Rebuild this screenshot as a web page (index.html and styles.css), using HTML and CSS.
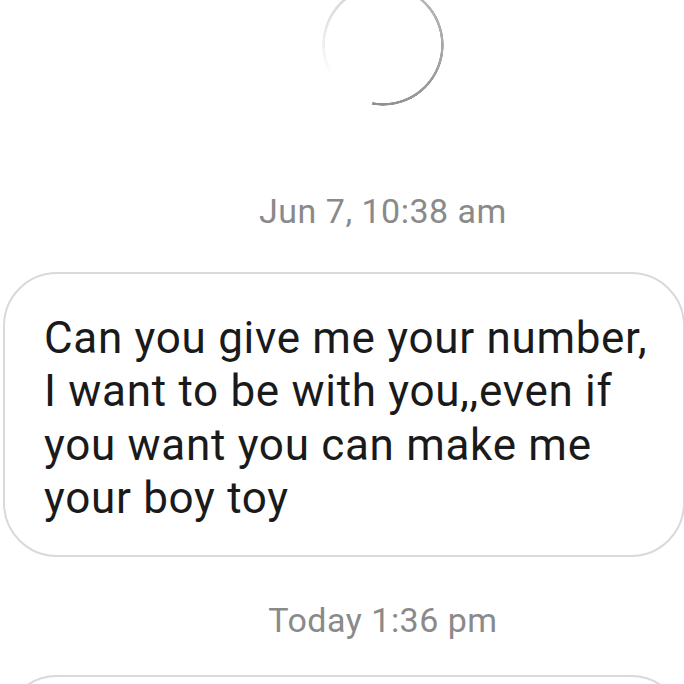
FILE: index.html
```
<!DOCTYPE html>
<html>
<head>
<meta charset="utf-8">
<link rel="stylesheet" href="styles.css">
</head>
<body>
<div class="thread">
  <div class="center-col">
    <div class="spinner"></div>
    <div class="stamp stamp-first">Jun 7, 10:38 am</div>
  </div>
  <div class="bubble">Can you give me your number,<br>I want to be with you,,even if<br>you want you can make me<br>your boy toy</div>
  <div class="center-col">
    <div class="stamp stamp-second">Today 1:36 pm</div>
  </div>
  <div class="bubble bubble-next"></div>
</div>
</body>
</html>
```
FILE: styles.css
```
html, body {
  margin: 0;
  padding: 0;
  background: #ffffff;
  width: 684px;
  height: 684px;
  overflow: hidden;
}
.thread {
  font-family: Roboto, "Noto Sans", sans-serif;
  display: flex;
  flex-direction: column;
}
.center-col {
  padding-left: 82px;
  display: flex;
  flex-direction: column;
  align-items: center;
}
.spinner {
  width: 122px;
  height: 122px;
  margin-top: -16px;
  border-radius: 50%;
  background: conic-gradient(from 238deg, rgba(160,160,160,0) 0deg, rgba(190,190,190,0.45) 60deg, #b8b8b8 160deg, #9c9c9c 250deg, #8e8e8e 312deg, rgba(255,255,255,0) 313deg);
  -webkit-mask: radial-gradient(circle, transparent 57.8px, #000 58.3px, #000 60.6px, transparent 61px);
  mask: radial-gradient(circle, transparent 57.8px, #000 58.3px, #000 60.6px, transparent 61px);
}
.stamp {
  font-size: 34px;
  line-height: 40px;
  letter-spacing: 0.5px;
  color: #8a8a8a;
  white-space: nowrap;
}
.stamp-first {
  margin-top: 85px;
  margin-bottom: 41px;
}
.stamp-second {
  margin-top: 43px;
  margin-bottom: 35px;
}
.bubble {
  box-sizing: border-box;
  margin-left: 3px;
  width: 682px;
  flex: none;
  border: 2px solid #d9d9d9;
  border-radius: 54px;
  padding: 38px 10px 30px 39px;
  font-size: 44px;
  line-height: 53.3px;
  letter-spacing: 0.7px;
  color: #1a1a1a;
  white-space: nowrap;
}
.bubble-next {
  height: 120px;
}
```
